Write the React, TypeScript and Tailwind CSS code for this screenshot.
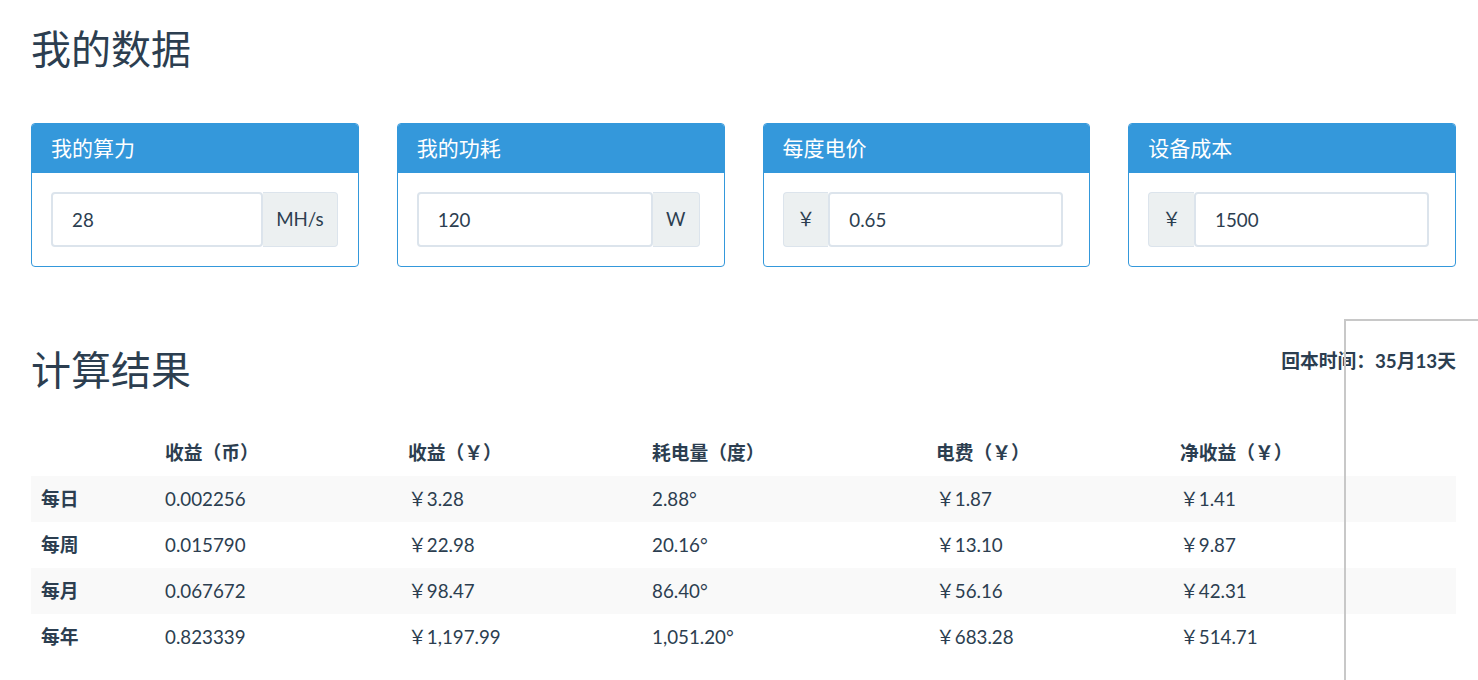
import React from "react";

interface Field {
  title: string;
  value: string;
  unit: string;
  prefix?: boolean;
  pad: string;
}

const fields: Field[] = [
  { title: "我的算力", value: "28", unit: "MH/s", pad: "pr-[20px]" },
  { title: "我的功耗", value: "120", unit: "W", pad: "pr-[24px]" },
  { title: "每度电价", value: "0.65", unit: "￥", prefix: true, pad: "pr-[26px]" },
  { title: "设备成本", value: "1500", unit: "￥", prefix: true, pad: "pr-[26px]" },
];

const rows = [
  ["每日", "0.002256", "￥3.28", "2.88°", "￥1.87", "￥1.41"],
  ["每周", "0.015790", "￥22.98", "20.16°", "￥13.10", "￥9.87"],
  ["每月", "0.067672", "￥98.47", "86.40°", "￥56.16", "￥42.31"],
  ["每年", "0.823339", "￥1,197.99", "1,051.20°", "￥683.28", "￥514.71"],
];

const headers = ["", "收益（币）", "收益（￥）", "耗电量（度）", "电费（￥）", "净收益（￥）"];

const font = { fontFamily: 'Lato, "Noto Sans CJK SC", sans-serif' };

const Addon = ({ text, left }: { text: string; left?: boolean }) => (
  <span
    className={`flex items-center px-[13px] bg-[#ecf0f1] border border-[#dce4ec] text-[18.75px] ${
      left ? "rounded-l border-r-0" : "rounded-r border-l-0"
    }`}
  >
    {text}
  </span>
);

const FieldCard = ({ field }: { field: Field }) => (
  <div className="border border-[#3498db] rounded overflow-hidden">
    <div className="h-[49px] bg-[#3498db] text-white text-[21px] px-[19px] pb-[1px] flex items-center">
      {field.title}
    </div>
    <div className={`p-[19px] ${field.pad}`}>
      <div className="flex h-[55px]">
        {field.prefix && <Addon text={field.unit} left />}
        <input
          className="flex-1 min-w-0 border-2 border-[#dce4ec] rounded px-[19px] pt-[2px] text-[18.75px] text-[#2c3e50] outline-none"
          defaultValue={field.value}
          style={font}
        />
        {!field.prefix && <Addon text={field.unit} />}
      </div>
    </div>
  </div>
);

export default function App() {
  return (
    <div className="relative min-h-[680px] bg-white text-[#2c3e50] overflow-hidden" style={font}>
      <div className="pl-[31px] pr-[22px]">
        <h1 className="mt-[27px] text-[40px] leading-[44px]">我的数据</h1>

        <div className="grid grid-cols-4 gap-[38px] mt-[52px]">
          {fields.map((f) => (
            <FieldCard key={f.title} field={f} />
          ))}
        </div>

        <div className="flex justify-between items-start mt-[81px]">
          <h1 className="text-[40px] leading-[44px]">计算结果</h1>
          <div className="text-[18.75px] leading-[26px] font-bold">回本时间：35月13天</div>
        </div>

        <table className="w-full table-fixed mt-[38px] text-[18.75px] leading-[26px]">
          <colgroup>
            <col className="w-[124px]" />
            <col className="w-[243px]" />
            <col className="w-[244px]" />
            <col className="w-[284px]" />
            <col className="w-[244px]" />
            <col />
          </colgroup>
          <thead>
            <tr>
              {headers.map((h, i) => (
                <th key={i} className="text-left font-bold px-[10px] py-[10px]">
                  {h}
                </th>
              ))}
            </tr>
          </thead>
          <tbody>
            {rows.map((r, i) => (
              <tr key={r[0]} className={i % 2 === 0 ? "bg-[#f9f9f9]" : ""}>
                {r.map((c, j) => (
                  <td key={j} className={`px-[10px] py-[10px] ${j === 0 ? "font-bold" : ""}`}>
                    {c}
                  </td>
                ))}
              </tr>
            ))}
          </tbody>
        </table>
      </div>

      <div className="absolute left-[1344px] top-[319px] right-0 bottom-0 border-l-2 border-t-2 border-[#c8c8c8]" />
    </div>
  );
}
